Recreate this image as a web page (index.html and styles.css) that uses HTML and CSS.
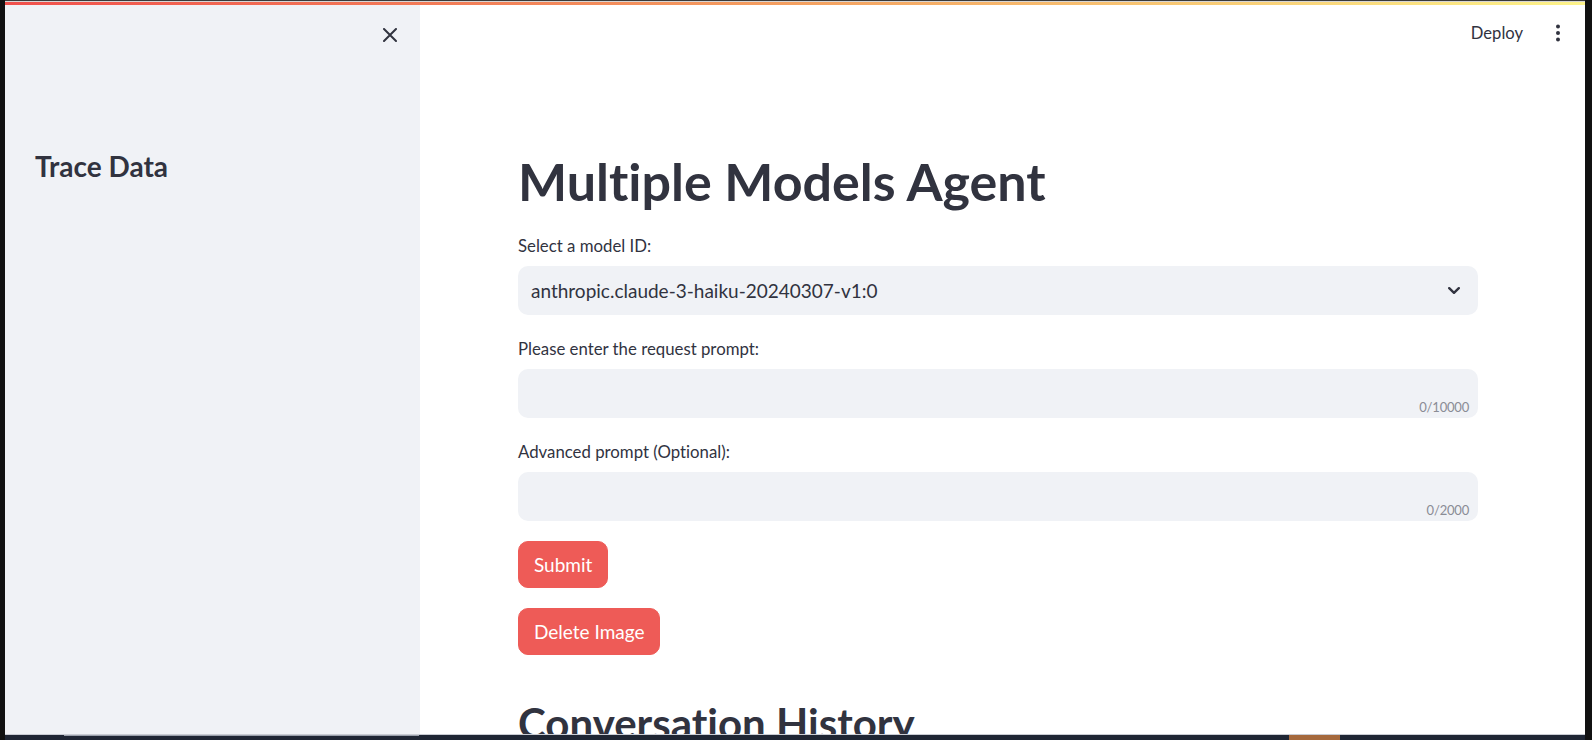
FILE: index.html
```html
<!DOCTYPE html>
<html lang="en">
<head>
<meta charset="utf-8">
<title>Multiple Models Agent</title>
<link rel="stylesheet" href="styles.css">
</head>
<body>
<div class="screen">
  <div class="frame">
    <div class="topline"></div>
    <div class="deco"></div>
    <div class="app">
      <aside class="sidebar">
        <div class="sb-head">
          <span class="close-btn">
            <svg width="14" height="14" viewBox="0 0 14 14"><path d="M1 1 L13 13 M13 1 L1 13" stroke="#31333F" stroke-width="2" stroke-linecap="round" fill="none"/></svg>
          </span>
        </div>
        <h2 class="sb-title">Trace Data</h2>
      </aside>
      <main class="main">
        <header class="toolbar">
          <span class="deploy">Deploy</span>
          <span class="kebab">
            <svg width="24" height="24" viewBox="0 0 24 24"><circle cx="12" cy="5.5" r="2" fill="#31333F"/><circle cx="12" cy="12" r="2" fill="#31333F"/><circle cx="12" cy="18.5" r="2" fill="#31333F"/></svg>
          </span>
        </header>
        <div class="block">
          <h1 class="title">Multiple Models Agent</h1>
          <div class="field">
            <label class="label">Select a model ID:</label>
            <div class="select">
              <span class="select-value">anthropic.claude-3-haiku-20240307-v1:0</span>
              <svg class="chevron" width="12" height="7" viewBox="0 0 12 7"><path d="M1.2 1.2 L6 5.8 L10.8 1.2" stroke="#31333F" stroke-width="2.4" stroke-linecap="round" stroke-linejoin="round" fill="none"/></svg>
            </div>
          </div>
          <div class="field">
            <label class="label">Please enter the request prompt:</label>
            <div class="textarea"><span class="counter">0/10000</span></div>
          </div>
          <div class="field field-last">
            <label class="label">Advanced prompt (Optional):</label>
            <div class="textarea"><span class="counter">0/2000</span></div>
          </div>
          <div class="buttons">
            <button class="btn">Submit</button>
            <button class="btn">Delete Image</button>
          </div>
          <h2 class="section-title">Conversation History</h2>
        </div>
      </main>
    </div>
    <div class="hline"></div>
    <div class="taskbar">
      <span class="tb-light"></span>
      <span class="tb-orange"></span>
    </div>
  </div>
</div>
</body>
</html>
```

FILE: styles.css
```css
html, body {
  margin: 0;
  padding: 0;
  background: #111111;
  width: 1592px;
  height: 740px;
  overflow: hidden;
}

.screen {
  display: flex;
  padding-left: 5px;
  padding-right: 7px;
  height: 740px;
  font-family: "Lato", "Noto Sans", sans-serif;
  font-variant-ligatures: none;
  color: #31333F;
}

.frame {
  width: 1580px;
  display: flex;
  flex-direction: column;
}

.topline {
  height: 1px;
  background: #3a3a3a;
  border-bottom: 1px solid #d6d6d6;
}

.deco {
  height: 3px;
  background: linear-gradient(90deg, #f0504c 0%, #f4a060 50%, #fdf38a 100%);
}

.app {
  height: 729px;
  display: flex;
  overflow: hidden;
  background: #ffffff;
}

.sidebar {
  width: 415px;
  flex: 0 0 415px;
  background: #f0f2f6;
  display: flex;
  flex-direction: column;
}

.sb-head {
  display: flex;
  justify-content: flex-end;
  padding: 23px 23px 0 0;
}

.close-btn {
  display: flex;
  width: 14px;
  height: 14px;
}

.sb-title {
  margin: 106px 0 0 0;
  padding-left: 30px;
  font-size: 28px;
  line-height: 36px;
  font-weight: 700;
  color: #31333F;
}

.main {
  flex: 1;
  display: flex;
  flex-direction: column;
  overflow: hidden;
}

.toolbar {
  height: 55px;
  flex: 0 0 55px;
  display: flex;
  align-items: center;
  justify-content: flex-end;
  gap: 23px;
  padding-right: 15px;
}

.deploy {
  font-size: 16.6px;
  color: #31333F;
}

.kebab {
  display: flex;
  width: 24px;
  height: 24px;
}

.block {
  width: 960px;
  padding: 88px 0 0 98px;
  display: flex;
  flex-direction: column;
}

.title {
  margin: 0 0 21px 0;
  font-size: 52px;
  line-height: 66px;
  font-weight: 700;
  color: #31333F;
}

.field {
  display: flex;
  flex-direction: column;
  margin-bottom: 23px;
}

.field-last {
  margin-bottom: 20px;
}

.label {
  font-size: 16.8px;
  line-height: 22px;
  margin-bottom: 9px;
  color: #31333F;
}

.select {
  height: 49px;
  border-radius: 10px;
  background: #f0f2f6;
  display: flex;
  align-items: center;
  justify-content: space-between;
  padding: 0 18px 0 13px;
}

.select-value {
  font-size: 19px;
  color: #31333F;
}

.textarea {
  height: 49px;
  border-radius: 10px;
  background: #f0f2f6;
  display: flex;
  align-items: flex-end;
  justify-content: flex-end;
  padding: 0 9px 3px 0;
  box-sizing: border-box;
}

.counter {
  font-size: 13px;
  line-height: 16px;
  letter-spacing: -0.2px;
  color: #8a8c95;
}

.buttons {
  display: flex;
  flex-direction: column;
  align-items: flex-start;
  gap: 20px;
}

.btn {
  height: 47px;
  padding: 0 15px;
  border: 1px solid #ee5b57;
  border-radius: 10px;
  background: #ee5b57;
  color: #ffffff;
  font-family: "Lato", "Noto Sans", sans-serif;
  font-variant-ligatures: none;
  font-size: 19px;
}

.section-title {
  margin: 41px 0 0 0;
  font-size: 42px;
  line-height: 54px;
  font-weight: 700;
  color: #31333F;
  white-space: nowrap;
}

.hline {
  height: 1px;
  background: #c9ccd3;
}

.taskbar {
  height: 5px;
  background: #1f2634;
  display: flex;
}

.tb-light {
  margin-left: 59px;
  width: 355px;
  height: 1px;
  background: #9aa0ab;
}

.tb-orange {
  margin-left: 870px;
  width: 51px;
  height: 5px;
  background: #a5693c;
}
```
